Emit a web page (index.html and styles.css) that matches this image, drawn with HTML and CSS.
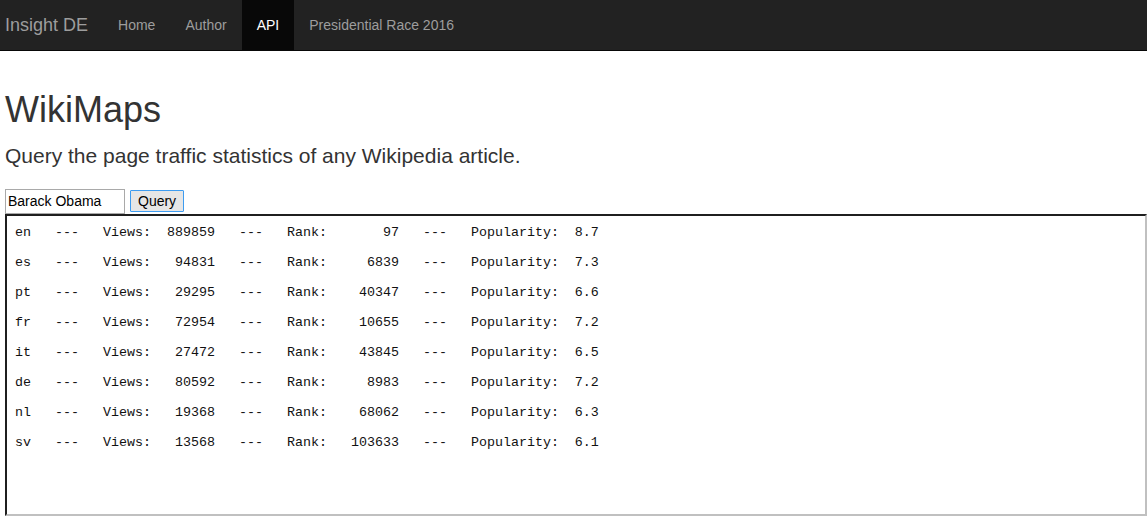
FILE: index.html
```html
<!DOCTYPE html>
<html>
<head>
<meta charset="utf-8">
<title>WikiMaps</title>
<link rel="stylesheet" href="styles.css">
</head>
<body>
<nav class="navbar">
  <a class="brand" href="#">Insight DE</a>
  <ul class="nav">
    <li><a href="#">Home</a></li>
    <li><a href="#">Author</a></li>
    <li class="active"><a href="#">API</a></li>
    <li><a href="#">Presidential Race 2016</a></li>
  </ul>
</nav>
<main class="page">
  <h1 class="title">WikiMaps</h1>
  <p class="lead">Query the page traffic statistics of any Wikipedia article.</p>
  <form class="query">
    <input class="query-input" type="text" value="Barack Obama">
    <button class="query-btn" type="button">Query</button>
  </form>
  <textarea class="results" readonly>
en   ---   Views:  889859   ---   Rank:       97   ---   Popularity:  8.7

es   ---   Views:   94831   ---   Rank:     6839   ---   Popularity:  7.3

pt   ---   Views:   29295   ---   Rank:    40347   ---   Popularity:  6.6

fr   ---   Views:   72954   ---   Rank:    10655   ---   Popularity:  7.2

it   ---   Views:   27472   ---   Rank:    43845   ---   Popularity:  6.5

de   ---   Views:   80592   ---   Rank:     8983   ---   Popularity:  7.2

nl   ---   Views:   19368   ---   Rank:    68062   ---   Popularity:  6.3

sv   ---   Views:   13568   ---   Rank:   103633   ---   Popularity:  6.1</textarea>
</main>
</body>
</html>
```

FILE: styles.css
```css
html, body {
  margin: 0;
  padding: 0;
  background: #fff;
}
body {
  font-family: "Liberation Sans", Arial, Helvetica, sans-serif;
  font-size: 14px;
  line-height: 20px;
  color: #333;
}
.navbar {
  display: flex;
  align-items: stretch;
  height: 50px;
  background: #222;
  border-bottom: 1px solid #080808;
}
.brand {
  display: block;
  padding: 15px 15px 15px 5px;
  font-size: 18px;
  line-height: 20px;
  color: #9d9d9d;
  text-decoration: none;
}
.nav {
  display: flex;
  list-style: none;
  margin: 0;
  padding: 0;
}
.nav li a {
  display: block;
  padding: 15px;
  line-height: 20px;
  color: #9d9d9d;
  text-decoration: none;
}
.nav li.active a {
  background: #080808;
  color: #fff;
}
.page {
  padding: 39px 0 0 5px;
}
.title {
  margin: 0 0 14px;
  font-size: 36px;
  font-weight: 500;
  line-height: 1.1;
  color: #333;
}
.lead {
  margin: 0 0 22px;
  font-size: 21px;
  line-height: 23px;
  color: #333;
}
.query {
  display: flex;
  align-items: flex-start;
  gap: 5px;
  margin: 0;
}
.query-input {
  box-sizing: border-box;
  width: 120px;
  height: 25px;
  margin: 0;
  padding: 1px 2px;
  border: 1px solid #a9a9a9;
  font-family: "Liberation Sans", Arial, sans-serif;
  font-size: 14px;
  color: #000;
}
.query-btn {
  box-sizing: border-box;
  height: 22px;
  margin-top: 1px;
  padding: 0 7px;
  border: 1px solid #3e9cf0;
  border-radius: 1px;
  background: #e6e6e6;
  font-family: "Liberation Sans", Arial, sans-serif;
  font-size: 14px;
  color: #000;
}
.results {
  display: block;
  box-sizing: border-box;
  width: 1142px;
  height: 302px;
  margin: 0;
  padding: 9px 8px 8px;
  border-style: solid;
  border-width: 2px;
  border-color: #1f1f1f #c0c0c0 #c0c0c0 #1f1f1f;
  resize: none;
  overflow: hidden;
  font-family: "Liberation Mono", "Courier New", monospace;
  font-size: 13.333px;
  line-height: 15px;
  color: #111;
  white-space: pre;
  outline: none;
}
```
